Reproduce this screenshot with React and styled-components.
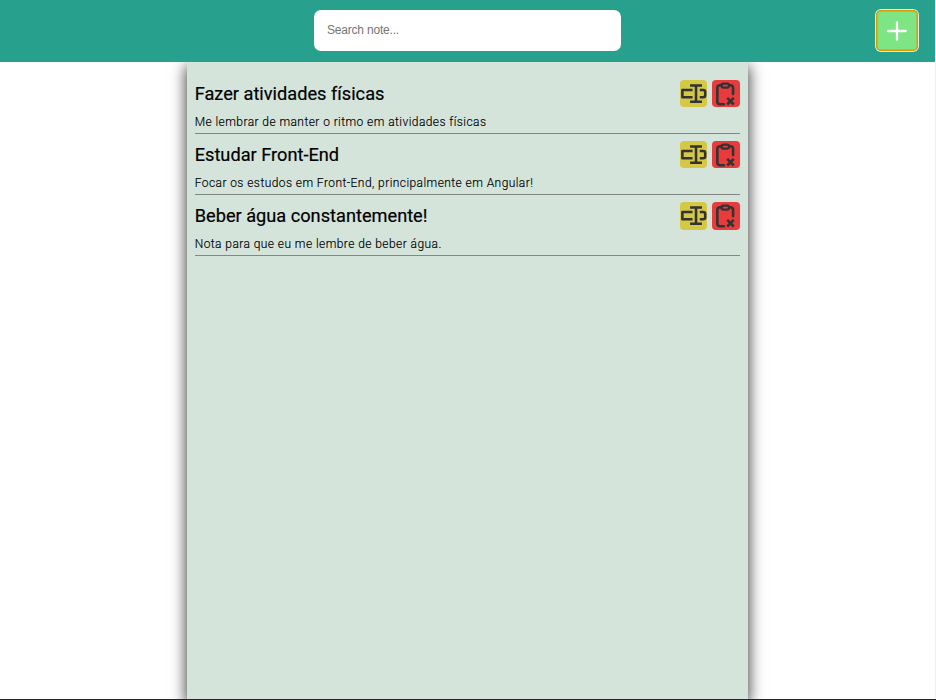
import React from "react";
import styled, { createGlobalStyle } from "styled-components";

const GlobalStyle = createGlobalStyle`
  * { box-sizing: border-box; }
  body { margin: 0; background: #fff; font-family: Roboto, sans-serif; overflow: hidden; }
`;

const Page = styled.div`
  height: 700px;
  display: flex;
  flex-direction: column;
  border-bottom: 1px solid #262626;
`;

const Body = styled.div`
  flex: 1;
  min-height: 0;
  display: flex;
  flex-direction: column;
  border-right: 1px solid #f1f1f1;
  overflow: hidden;
`;

const Header = styled.header`
  flex: none;
  height: 62px;
  padding: 10px 17px 11px 0;
  display: grid;
  grid-template-columns: 314px 306.5px 1fr;
  align-items: start;
  background: #27a18d;
  z-index: 1;
`;

const Search = styled.input`
  grid-column: 2;
  width: 100%;
  height: 41px;
  padding: 0 13px 1px;
  border: 0;
  border-radius: 7px;
  outline: none;
  background: #fff;
  font: 12px "Liberation Sans", sans-serif;
  letter-spacing: -0.2px;
  &::placeholder { color: #757575; opacity: 1; }
`;

const AddButton = styled.button`
  justify-self: end;
  width: 42px;
  height: 41px;
  padding: 0;
  border: 0;
  border-radius: 5px;
  background: #7ee585;
  box-shadow: inset 0 0 0 1.5px #e59700, 0 0 0 1px #e4eee4;
  svg { display: block; margin: 0 auto; }
`;

const Board = styled.main`
  flex: 1;
  width: 561.5px;
  margin-left: 186.5px;
  padding: 10.5px 8.4px 0 8.2px;
  background: #d4e4da;
  box-shadow: 0 5px 14px 1px rgba(0, 0, 0, 0.75);
`;

const Note = styled.article`
  height: 61.2px;
  padding-top: 7px;
  border-bottom: 1px solid #7f8883;
`;

const NoteHead = styled.div`
  display: flex;
  align-items: flex-start;
  justify-content: space-between;
  height: 28px;
`;

const Title = styled.h2`
  margin: 0;
  font-size: 18.2px;
  font-weight: 400;
  line-height: 28px;
  color: #000;
  -webkit-text-stroke: 0.2px #000;
`;

const Actions = styled.div`
  display: flex;
  gap: 4.5px;
`;

const ActionButton = styled.button`
  width: 27.7px;
  height: 27.7px;
  padding: 0;
  border: 0;
  border-radius: 4px;
  background: ${(p) => p.$color};
  svg { display: block; width: 100%; height: 100%; }
`;

const Description = styled.p`
  margin: 5px 0 0;
  font-size: 12px;
  font-weight: 300;
  line-height: 18px;
  letter-spacing: 0.43px;
  color: #000;
  -webkit-text-stroke: 0.15px #000;
`;

const RenameIcon = () => (
  <svg viewBox="0 0 28 28" fill="none" stroke="#333" strokeWidth="2.6">
    <path d="M12.7 10.2H2.4v7.2h10.3" strokeLinejoin="round" />
    <path d="M20 10.2h3.5q2 0 2 2v3.2q0 2-2 2H20" />
    <path d="M10.2 5.6h12M10.2 22h12M16.2 5.6V22" />
  </svg>
);

const ClipboardXIcon = () => (
  <svg viewBox="0 0 28 28" fill="none" stroke="#333" strokeWidth="2.6">
    <path d="M10 5.3H8.2q-2.8 0-2.8 2.8v13.7q0 2.8 2.8 2.8h3.8" strokeLinecap="round" />
    <path d="M18 5.3h.5q2.8 0 2.8 2.8v6.1" strokeLinecap="round" />
    <rect x="9.5" y="3.6" width="7.8" height="4" rx="2" strokeWidth="2.3" />
    <path d="m15.4 18.1 6.6 6.7m0-6.7-6.6 6.7" />
  </svg>
);

const PlusIcon = () => (
  <svg width="20" height="20" viewBox="0 0 20 20" fill="none" stroke="#fff" strokeWidth="2.3" strokeLinecap="round">
    <path d="M10 1.3v17.4M1.3 10h17.4" />
  </svg>
);

const notes = [
  ["Fazer atividades físicas", "Me lembrar de manter o ritmo em atividades físicas"],
  ["Estudar Front-End", "Focar os estudos em Front-End, principalmente em Angular!"],
  ["Beber água constantemente!", "Nota para que eu me lembre de beber água."],
];

export default function App() {
  return (
    <Page>
      <GlobalStyle />
      <Body>
        <Header>
          <Search placeholder="Search note..." />
          <AddButton aria-label="Add note"><PlusIcon /></AddButton>
        </Header>
        <Board>
          {notes.map(([title, text]) => (
            <Note key={title}>
              <NoteHead>
                <Title>{title}</Title>
                <Actions>
                  <ActionButton $color="#d5c845" aria-label="Edit note"><RenameIcon /></ActionButton>
                  <ActionButton $color="#e83c3c" aria-label="Delete note"><ClipboardXIcon /></ActionButton>
                </Actions>
              </NoteHead>
              <Description>{text}</Description>
            </Note>
          ))}
        </Board>
      </Body>
    </Page>
  );
}
